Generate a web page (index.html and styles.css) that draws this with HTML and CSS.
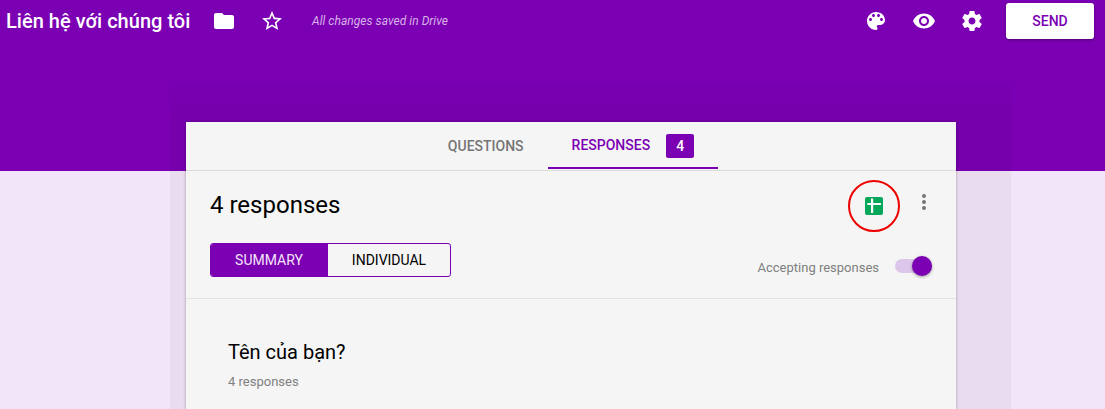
FILE: index.html
```html
<!DOCTYPE html>
<html lang="vi">
<head>
<meta charset="utf-8">
<title>Liên hệ với chúng tôi</title>
<link rel="stylesheet" href="styles.css">
</head>
<body>
<div class="band"></div>
<header class="topbar">
  <div class="title">Liên hệ với chúng tôi</div>
  <svg class="ico folder" viewBox="0 0 24 24"><path d="M10 4H4c-1.1 0-2 .9-2 2v12c0 1.1.9 2 2 2h16c1.1 0 2-.9 2-2V8c0-1.100-.9-2-2-2h-8l-2-2z"/></svg>
  <svg class="ico star" viewBox="0 0 24 24"><path d="M22 9.240l-7.190-.62L12 2 9.190 8.630 2 9.240l5.460 4.730L5.820 21 12 17.270 18.180 21l-1.630-7.030L22 9.240zM12 15.400l-3.760 2.270 1-4.280-3.320-2.880 4.380-.38L12 6.100l1.710 4.040 4.380.38-3.320 2.880 1 4.280L12 15.400z"/></svg>
  <div class="saved">All changes saved in Drive</div>
  <div class="spacer"></div>
  <svg class="ico palette" viewBox="0 0 24 24"><path d="M12 3c-4.970 0-9 4.030-9 9s4.030 9 9 9c.83 0 1.500-.67 1.500-1.500 0-.39-.15-.74-.39-1.010-.23-.26-.38-.61-.38-.99 0-.83.67-1.500 1.500-1.500H16c2.760 0 5-2.240 5-5 0-4.420-4.030-8-9-8zm-5.500 9c-.83 0-1.500-.67-1.500-1.500S5.670 9 6.500 9 8 9.670 8 10.500 7.330 12 6.500 12zm3-4C8.670 8 8 7.330 8 6.500S8.670 5 9.500 5s1.500.67 1.500 1.500S10.330 8 9.500 8zm5 0c-.83 0-1.500-.67-1.500-1.500S13.670 5 14.500 5s1.500.67 1.500 1.500S15.330 8 14.500 8zm3 4c-.83 0-1.500-.67-1.500-1.500S16.670 9 17.500 9s1.500.67 1.500 1.500-.67 1.500-1.500 1.500z"/></svg>
  <svg class="ico eye" viewBox="0 0 24 24"><path d="M12 4.500C7 4.500 2.730 7.610 1 12c1.730 4.390 6 7.500 11 7.500s9.270-3.110 11-7.500c-1.730-4.390-6-7.500-11-7.500zM12 17c-2.760 0-5-2.240-5-5s2.240-5 5-5 5 2.240 5 5-2.240 5-5 5zm0-8c-1.660 0-3 1.340-3 3s1.340 3 3 3 3-1.340 3-3-1.340-3-3-3z"/></svg>
  <svg class="ico gear" viewBox="0 0 24 24"><path d="M19.430 12.980c.04-.32.07-.64.07-.98s-.03-.66-.07-.98l2.110-1.650c.19-.15.24-.42.12-.64l-2-3.460c-.12-.22-.39-.3-.61-.22l-2.490 1c-.52-.4-1.080-.73-1.690-.98l-.38-2.650C14.460 2.180 14.250 2 14 2h-4c-.25 0-.46.18-.49.420l-.38 2.650c-.61.25-1.170.59-1.690.98l-2.490-1c-.23-.09-.49 0-.61.22l-2 3.460c-.13.220-.07.490.12.640l2.110 1.650c-.04.320-.07.650-.07.980s.03.660.07.980l-2.110 1.650c-.19.150-.24.420-.12.640l2 3.460c.12.220.39.300.61.220l2.490-1c.52.400 1.080.730 1.690.980l.38 2.650c.03.240.24.420.49.420h4c.25 0 .46-.18.49-.42l.38-2.650c.61-.25 1.170-.59 1.690-.98l2.490 1c.23.090.49 0 .61-.22l2-3.460c.12-.22.07-.49-.12-.64l-2.110-1.650zM12 15.500c-1.930 0-3.500-1.570-3.500-3.500s1.570-3.500 3.500-3.500 3.500 1.570 3.500 3.500-1.570 3.500-3.500 3.500z"/></svg>
  <button class="send">SEND</button>
</header>
<main class="card">
  <nav class="tabs">
    <div class="tab">QUESTIONS</div>
    <div class="tab active">RESPONSES<span class="badge">4</span></div>
  </nav>
  <section class="head">
    <div class="head-top">
      <h1 class="count">4 responses</h1>
      <div class="head-actions">
        <span class="sheets-ring">
          <svg class="sheets" viewBox="0 0 18 18"><rect width="18" height="18" rx="2" fill="#05a75a"/><path d="M6 1.500h2.200V6H16v2H8.200v8H6V8H2.300V6H6z" fill="#fff"/></svg>
        </span>
        <svg class="more" viewBox="0 0 4 16"><circle cx="2" cy="2" r="2"/><circle cx="2" cy="8" r="2"/><circle cx="2" cy="14" r="2"/></svg>
      </div>
    </div>
    <div class="head-bottom">
      <div class="segments">
        <div class="seg on">SUMMARY</div>
        <div class="seg">INDIVIDUAL</div>
      </div>
      <div class="accept">
        <span class="accept-label">Accepting responses</span>
        <span class="switch"><span class="knob"></span></span>
      </div>
    </div>
  </section>
  <section class="question">
    <h2 class="q-title">Tên của bạn?</h2>
    <div class="q-sub">4 responses</div>
  </section>
</main>
</body>
</html>
```
FILE: styles.css
```css
html, body { margin: 0; padding: 0; height: 409px; overflow: hidden; }
body { background: #f3e5f9; font-family: Roboto, "Noto Sans", sans-serif; position: relative; }
.band { position: absolute; left: 170px; top: 84px; width: 841px; height: 325px; background: linear-gradient(rgba(0,0,0,.015), rgba(0,0,0,.04) 35px); z-index: 1; }
.topbar { height: 171px; background: #7b00b3; display: flex; align-items: flex-start; box-sizing: border-box; padding: 3px 11px 0 6px; color: #fff; }
.title { font-size: 20px; font-weight: 500; line-height: 36px; width: 196px; white-space: nowrap; letter-spacing: .02px; }
.ico { width: 24px; height: 24px; fill: #fff; flex: none; margin-top: 6px; }
.folder { margin-left: 10px; }
.star { margin-left: 24px; }
.saved { font-size: 12px; font-style: italic; color: #d8b3e8; line-height: 36px; margin-left: 28px; letter-spacing: .04px; }
.spacer { flex: 1; }
.palette { margin-right: 24px; }
.eye { margin-right: 24px; }
.gear { margin-right: 22px; }
.send { width: 88px; height: 36px; background: #fff; border: 0; border-radius: 3px; color: #7b00b3; font: 500 14px Roboto, sans-serif; box-shadow: 0 1px 3px rgba(0,0,0,.35); }
.card { position: relative; z-index: 2; width: 770px; margin: -49px 0 0 186px; background: #f5f5f5; box-shadow: 0 0 3px rgba(0,0,0,.3); height: 287px; }
.tabs { display: flex; justify-content: center; height: 48px; border-bottom: 1px solid #dcdcdc; font-size: 14px; font-weight: 500; color: #757575; }
.tab { padding: 0 24px; line-height: 49px; }
.tab.active { color: #7b00b3; border-bottom: 2px solid #7b00b3; height: 47px; box-sizing: border-box; display: flex; align-items: center; padding-top: 2px; }
.badge { background: #7b00b3; color: #fff; border-radius: 2px; width: 28px; height: 24px; line-height: 24px; text-align: center; margin-left: 16px; }
.head { padding: 0 24px; border-bottom: 1px solid #e3e3e3; height: 127px; position: relative; }
.head-top { display: flex; justify-content: space-between; }
.count { margin: 18px 0 0; font-size: 24px; font-weight: 400; color: #000; line-height: 32px; }
.head-actions { display: flex; align-items: flex-start; }
.sheets-ring { width: 48px; height: 48px; border: 2px solid #ee0000; border-radius: 50%; display: flex; align-items: center; justify-content: center; margin-top: 9px; }
.sheets { width: 18px; height: 18px; }
.more { width: 4px; height: 16px; fill: #757575; margin: 23px 6px 0 22px; }
.head-bottom { display: flex; justify-content: space-between; align-items: flex-start; margin-top: 11px; }
.segments { display: flex; width: 241px; height: 34px; box-sizing: border-box; border: 1px solid #7b00b3; border-radius: 3px; font-size: 14px; overflow: hidden; }
.seg { flex: none; box-sizing: border-box; text-align: center; line-height: 32px; width: 123px; color: #000; padding-right: 1px; }
.seg.on { width: 117px; background: #7b00b3; color: #f3e5f9; }
.accept { display: flex; align-items: center; margin-top: 13px; }
.accept-label { font-size: 13px; color: #808080; margin-right: 16px; padding-top: 4px; }
.switch { position: relative; width: 37px; height: 14px; border-radius: 7px; background: #dcc6e9; display: block; }
.knob { position: absolute; right: 0; top: -3px; width: 20px; height: 20px; border-radius: 50%; background: #7b00b3; box-shadow: 0 1px 3px rgba(0,0,0,.4); }
.question { padding: 39px 42px 0; }
.q-title { margin: 0; font-size: 20px; font-weight: 400; line-height: 28px; color: #000; }
.q-sub { font-size: 13px; color: #808080; margin-top: 7px; line-height: 18px; }
```
